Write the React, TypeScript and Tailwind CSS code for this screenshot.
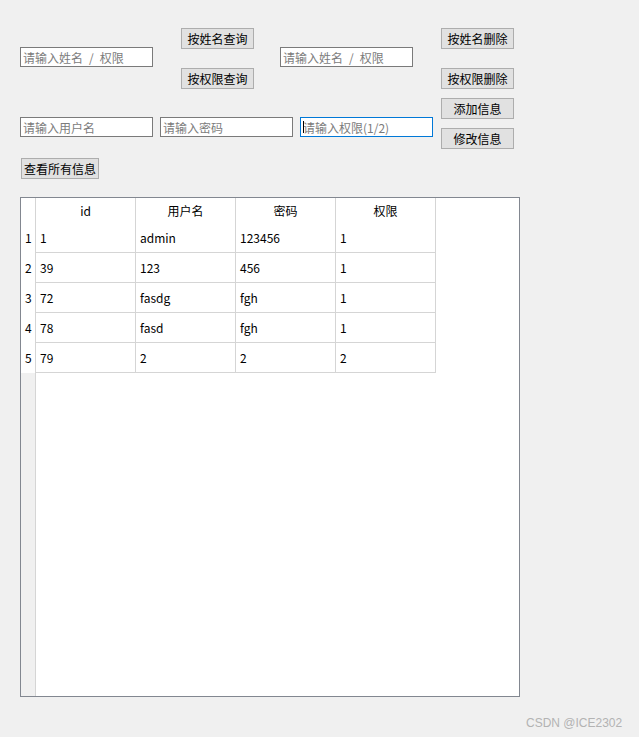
import React from "react";

const font = { fontFamily: '"Noto Sans CJK SC", "Noto Sans", sans-serif' };

function Btn({ label, w = "w-[73px]" }: { label: string; w?: string }) {
  return (
    <button
      className={`${w} h-[21px] shrink-0 bg-[#e1e1e1] border border-[#adadad] text-[12px] leading-none text-black flex items-center justify-center p-0`}
    >
      {label}
    </button>
  );
}

function Field({ ph, focused = false }: { ph: string; focused?: boolean }) {
  return (
    <div
      className={`relative w-[133px] h-[20px] shrink-0 bg-white border ${
        focused ? "border-[#0078d7]" : "border-[#7a7a7a]"
      } flex items-center`}
    >
      {focused && <span className="absolute left-[2px] top-[3px] w-[1px] h-[12px] bg-black" />}
      <input
        placeholder={ph}
        className="w-full h-full px-[2px] text-[12px] leading-none bg-transparent outline-none placeholder:text-[#7c7c7c]"
      />
    </div>
  );
}

const rows = [
  ["1", "admin", "123456", "1"],
  ["39", "123", "456", "1"],
  ["72", "fasdg", "fgh", "1"],
  ["78", "fasd", "fgh", "1"],
  ["79", "2", "2", "2"],
];

export default function App() {
  return (
    <div className="w-[639px] h-[737px] bg-[#f0f0f0] relative" style={font}>
      <div className="pl-[20px] pt-[28px] flex">
        {/* left area */}
        <div className="flex flex-col w-[393px] shrink-0">
          <div className="flex">
            <div className="mt-[19px]">
              <Field ph={"请输入姓名\u2002/\u2002权限"} />
            </div>
            <div className="ml-[28px] flex flex-col gap-[19px]">
              <Btn label="按姓名查询" />
              <Btn label="按权限查询" />
            </div>
            <div className="ml-[26px] mt-[19px]">
              <Field ph={"请输入姓名\u2002/\u2002权限"} />
            </div>
          </div>
          <div className="flex gap-[7px] mt-[28px]">
            <Field ph="请输入用户名" />
            <Field ph="请输入密码" />
            <Field ph="请输入权限(1/2)" focused />
          </div>
          <div className="mt-[21px] ml-[1px]">
            <Btn label="查看所有信息" w="w-[78px]" />
          </div>
        </div>
        {/* right buttons */}
        <div className="ml-[28px] flex flex-col">
          <Btn label="按姓名删除" />
          <div className="mt-[19px]">
            <Btn label="按权限删除" />
          </div>
          <div className="mt-[9px]">
            <Btn label="添加信息" />
          </div>
          <div className="mt-[9px]">
            <Btn label="修改信息" />
          </div>
        </div>
      </div>

      {/* table */}
      <div className="ml-[20px] mt-[18px] w-[500px] h-[500px] border border-[#828790] bg-white flex text-[12px] text-black">
        <div className="w-[15px] flex flex-col border-r border-[#d5d5d5] bg-[#f0f0f0]">
          <div className="h-[25px] bg-white" />
          {rows.map((_, i) => (
            <div key={i} className="h-[30px] bg-white flex items-center pl-[4px]">
              {i + 1}
            </div>
          ))}
        </div>
        <div className="flex flex-col">
          <div className="flex h-[25px]">
            {["id", "用户名", "密码", "权限"].map((h) => (
              <div key={h} className="w-[100px] border-r border-[#d5d5d5] flex items-center justify-center">
                {h}
              </div>
            ))}
          </div>
          {rows.map((r, i) => (
            <div key={i} className="flex h-[30px]">
              {r.map((c, j) => (
                <div
                  key={j}
                  className="w-[100px] border-r border-b border-[#d5d5d5] flex items-center pl-[4px]"
                >
                  {c}
                </div>
              ))}
            </div>
          ))}
        </div>
      </div>

      <div
        className="absolute left-[526px] top-[714px] text-[12px] text-[#b3b3b3]"
        style={{ fontFamily: '"Liberation Sans", Arial, sans-serif' }}
      >
        CSDN @ICE2302
      </div>
    </div>
  );
}
